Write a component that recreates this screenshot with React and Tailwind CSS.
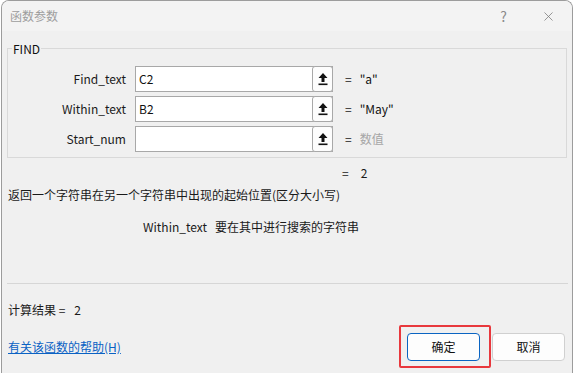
import { X } from 'lucide-react'

const ARGS = [
  { name: 'Find_text', value: 'C2', result: '"a"' },
  { name: 'Within_text', value: 'B2', result: '"May"' },
  { name: 'Start_num', value: '', result: '数值', muted: true },
]

function RefIcon() {
  return (
    <svg width="10" height="14" viewBox="0 0 10 14" className="block">
      <path d="M5 1 L9.5 6 L6.5 6 L6.5 10 L3.5 10 L3.5 6 L0.5 6 Z" fill="#111" />
      <rect x="0.5" y="11.5" width="9" height="1.6" fill="#111" />
    </svg>
  )
}

function ArgRow({ arg }) {
  return (
    <div className="flex items-center h-[26px]">
      <div className="w-[118px] text-right text-[12px] text-[#1a1a1a]">{arg.name}</div>
      <div className="ml-[9px] w-[198px] h-[26px] flex border border-[#a8a8a8] bg-white">
        <div className="flex-1 px-[3px] flex items-center text-[12px] text-[#111]">{arg.value}</div>
        <div className="w-[21px] -my-[1px] -mr-[1px] flex items-center justify-center border border-[#a8a8a8] rounded-[3px] bg-[#fdfdfd]">
          <RefIcon />
        </div>
      </div>
      <div className="ml-[12px] text-[12px] text-[#1a1a1a]">=</div>
      <div className={`ml-[8px] text-[12px] ${arg.muted ? 'text-[#a6a6a6]' : 'text-[#111]'}`}>{arg.result}</div>
    </div>
  )
}

export default function App() {
  return (
    <div className="w-[574px] h-[373px] bg-white font-['Noto_Sans_CJK_SC',sans-serif] leading-[18px]">
      <div className="ml-[1px] w-[572px] h-[373px] flex flex-col border border-b-0 border-[#9c9c9c] rounded-t-[8px] overflow-hidden">
        {/* Title bar */}
        <div className="h-[30px] shrink-0 flex items-center bg-[#f3f3f3] pl-[8px]">
          <span className="text-[12px] text-[#9d9d9d]">函数参数</span>
          <span className="ml-auto text-[14px] text-[#8a8a8a]">?</span>
          <X className="ml-[34px] mr-[16px] w-[15px] h-[15px] text-[#777]" strokeWidth={1.2} />
        </div>

        {/* Body */}
        <div className="flex-1 flex flex-col bg-[#f0f0f0] px-[5px]">
          <div className="relative mt-[17px] h-[110px] border border-[#d9d9d9] pt-[17px] flex flex-col gap-[4px] w-[560px]">
            <span className="absolute -top-[9px] left-[4px] px-[1px] bg-[#f0f0f0] text-[12px] text-[#111]">FIND</span>
            {ARGS.map(a => <ArgRow key={a.name} arg={a} />)}
          </div>

          <div className="mt-[6px] pl-[335px] flex text-[12px] text-[#1a1a1a]">
            <span>=</span>
            <span className="ml-[12px]">2</span>
          </div>

          <div className="mt-[4px] pl-[1px] text-[12px] text-[#1a1a1a]">返回一个字符串在另一个字符串中出现的起始位置(区分大小写)</div>

          <div className="mt-[14px] pl-[136px] flex text-[12px] text-[#1a1a1a]">
            <span>Within_text</span>
            <span className="ml-[8px]">要在其中进行搜索的字符串</span>
          </div>

          <div className="mt-[47px] w-[561px] border-t border-[#d6d6d6]" />

          <div className="mt-[17px] pl-[1px] flex text-[12px] text-[#1a1a1a]">
            <span>计算结果 =</span>
            <span className="ml-[9px]">2</span>
          </div>

          <div className="mt-[14px] flex items-center">
            <a href="#" className="pl-[1px] text-[12px] text-[#0a62c4] underline">有关该函数的帮助(H)</a>
            <div className="ml-auto mr-[2px] flex gap-[12px]">
              <div className="relative">
                <span className="absolute -left-[8px] -right-[11px] -top-[8px] -bottom-[7px] border-2 border-[#e8383d] rounded-[2px]" />
                <button type="button" className="w-[73px] h-[28px] rounded-[4px] border border-[#0a64c2] bg-[#fdfdfd] text-[12px] text-[#111]">确定</button>
              </div>
              <button type="button" className="w-[73px] h-[28px] rounded-[4px] border border-[#d0d0d0] bg-[#fdfdfd] text-[12px] text-[#111]">取消</button>
            </div>
          </div>
        </div>
      </div>
    </div>
  )
}
